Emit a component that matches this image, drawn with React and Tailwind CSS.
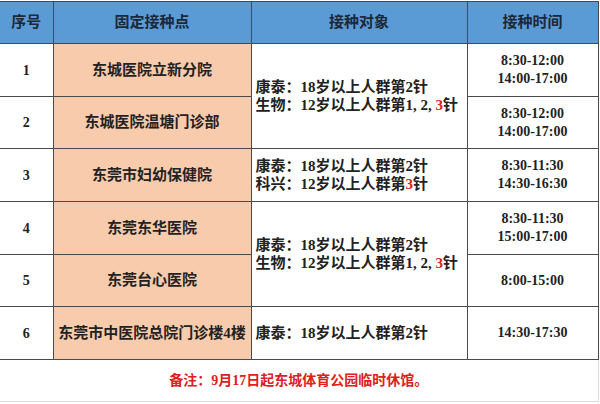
import React from 'react';

const font = { fontFamily: '"Liberation Serif", "Noto Sans CJK SC", serif' };

const rows = [
    { no: '1', site: '东城医院立新分院', times: ['8:30-12:00', '14:00-17:00'], target: 'a', span: 2 },
    { no: '2', site: '东城医院温塘门诊部', times: ['8:30-12:00', '14:00-17:00'] },
    { no: '3', site: '东莞市妇幼保健院', times: ['8:30-11:30', '14:30-16:30'], target: 'b', span: 1 },
    { no: '4', site: '东莞东华医院', times: ['8:30-11:30', '15:00-17:00'], target: 'a', span: 2 },
    { no: '5', site: '东莞台心医院', times: ['8:00-15:00'] },
    { no: '6', site: '东莞市中医院总院门诊楼4楼', times: ['14:30-17:30'], target: 'c', span: 1 },
];

const Target = ({ type }) => {
    if (type === 'a') {
        return (
            <>
                <div>康泰：18岁以上人群第2针</div>
                <div>生物：12岁以上人群第1, 2, <span className="text-[#e02020]">3</span>针</div>
            </>
        );
    }
    if (type === 'b') {
        return (
            <>
                <div>康泰：18岁以上人群第2针</div>
                <div>科兴：12岁以上人群第<span className="text-[#e02020]">3</span>针</div>
            </>
        );
    }
    return <div>康泰：18岁以上人群第2针</div>;
};

const App = () => {
    const heights = ['h-[53px]', 'h-[52px]', 'h-[53px]', 'h-[53px]', 'h-[52px]', 'h-[53px]'];
    return (
        <div className="w-[600px] h-[404px] bg-white overflow-hidden pt-px" style={font}>
            <table className="border-collapse table-fixed w-[598px] text-[#222] font-semibold">
                <colgroup>
                    <col className="w-[53px]" />
                    <col className="w-[198px]" />
                    <col className="w-[216px]" />
                    <col className="w-[131px]" />
                </colgroup>
                <thead>
                    <tr className="h-[42px] bg-[#5b9bd5] text-[15px] font-bold text-[#1c2838]">
                        <th className="border-t border-b border-r border-[#4a4a4a]">序号</th>
                        <th className="border border-[#4a4a4a]">固定接种点</th>
                        <th className="border border-[#4a4a4a]">接种对象</th>
                        <th className="border border-[#4a4a4a]">接种时间</th>
                    </tr>
                </thead>
                <tbody>
                    {rows.map((r, i) => (
                        <tr key={r.no} className={heights[i]}>
                            <td className="border-b border-r border-[#4a4a4a] text-center text-[14px] font-bold">{r.no}</td>
                            <td className="border border-[#4a4a4a] bg-[#f8cbad] text-center text-[15px]">{r.site}</td>
                            {r.target && (
                                <td rowSpan={r.span} className="border border-[#4a4a4a] px-1 text-[15px] leading-[18px] align-middle">
                                    <Target type={r.target} />
                                </td>
                            )}
                            <td className="border border-[#4a4a4a] text-center text-[14px] font-bold leading-[18px]">
                                {r.times.map((t) => (
                                    <div key={t}>{t}</div>
                                ))}
                            </td>
                        </tr>
                    ))}
                    <tr className="h-[42px]">
                        <td colSpan={4} className="border-r border-b border-[#d8dde3] text-center text-[14px] font-bold text-[#e02020]">
                            备注：9月17日起东城体育公园临时休馆。
                        </td>
                    </tr>
                </tbody>
            </table>
        </div>
    );
};

export default App;
